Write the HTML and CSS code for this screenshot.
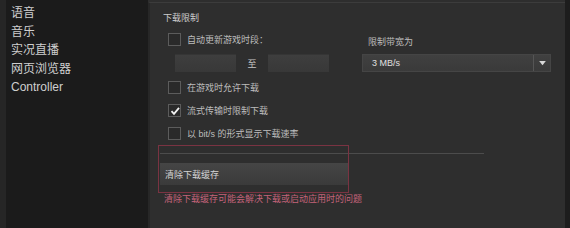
FILE: index.html
```html
<!DOCTYPE html>
<html lang="zh-CN">
<head>
  <meta charset="UTF-8"/>
  <title>下载设置</title>
  <link rel="stylesheet" href="styles.css">
</head>
<body>
<div class="edge"></div>
<nav class="sidebar">
  <div class="nav-item">语音</div>
  <div class="nav-item">音乐</div>
  <div class="nav-item">实况直播</div>
  <div class="nav-item">网页浏览器</div>
  <div class="nav-item">Controller</div>
</nav>
<main class="panel">
  <div class="section-title">下载限制</div>
  <div class="grid">
    <div class="left">
      <label class="check-row"><span class="box"></span>自动更新游戏时段：</label>
      <div class="time-row">
        <span class="input"></span>
        <span class="to">至</span>
        <span class="input"></span>
      </div>
      <label class="check-row"><span class="box"></span>在游戏时允许下载</label>
      <label class="check-row"><span class="box checked">
        <svg viewBox="0 0 12 12" width="12" height="12"><path d="M2.5 6.2 L5 8.8 L10 2.8" fill="none" stroke="#f2f2f2" stroke-width="1.8"/></svg>
      </span>流式传输时限制下载</label>
      <label class="check-row"><span class="box"></span>以 bit/s 的形式显示下载速率</label>
    </div>
    <div class="right">
      <div class="field-label">限制带宽为</div>
      <div class="select">
        <span class="select-value">3 MB/s</span>
        <span class="select-arrow"><svg viewBox="0 0 8 6" width="7" height="5"><path d="M0 0 H8 L4 5 Z" fill="#d8d8d8"/></svg></span>
      </div>
    </div>
  </div>
  <div class="rule"></div>
  <div class="cache">
    <button class="btn">清除下载缓存</button>
    <div class="hint">清除下载缓存可能会解决下载或启动应用时的问题</div>
    <div class="highlight"></div>
  </div>
</main>
<div class="edge-right"></div>
</body>
</html>
```

FILE: styles.css
```css
body {
  margin: 0;
  height: 228px;
  display: flex;
  background: #2e2e2e;
  font-family: 'Liberation Sans', 'Noto Sans CJK SC', sans-serif;
  overflow: hidden;
}
.edge {
  width: 6px;
  background: #262626;
}
.sidebar {
  width: 142px;
  background: #1b1b1b;
  padding: 4px 0 0 5px;
  box-sizing: border-box;
}
.nav-item {
  font-size: 12px;
  line-height: 18.5px;
  color: #cfcfcf;
}
.panel {
  flex: 1;
  position: relative;
  border-left: 2px solid #272727;
  border-top: 1px solid #3c3c3c;
  margin-top: 2px;
  padding: 10px 0 0 13px;
  color: #bdbdbd;
  font-size: 9px;
}
.edge-right {
  width: 5px;
  background: #1d1d1d;
}
.section-title {
  line-height: 11px;
  color: #cccccc;
}
.grid {
  display: flex;
  margin-top: 9px;
}
.left {
  width: 194px;
  padding-left: 5px;
}
.check-row {
  display: flex;
  align-items: center;
  height: 13px;
  gap: 6px;
}
.box {
  width: 11px;
  height: 11px;
  border: 1px solid #5c5c5c;
  background: #2a2a2a;
  display: flex;
  align-items: center;
  justify-content: center;
}
.box svg {
  flex: none;
}
.time-row {
  display: flex;
  align-items: center;
  margin: 8px 0 9px 7px;
}
.input {
  width: 61px;
  height: 18px;
  background: linear-gradient(#3e3e3e, #383838);
  border-top: 1px solid #353535;
  box-sizing: border-box;
}
.to {
  width: 32px;
  text-align: center;
  color: #c6c6c6;
}
.check-row + .check-row {
  margin-top: 10px;
}
.field-label {
  line-height: 11px;
  margin-top: 4px;
  padding-left: 6px;
  color: #bcbcbc;
}
.select {
  width: 189px;
  height: 18px;
  margin-top: 6px;
  display: flex;
  align-items: center;
  background: linear-gradient(#404040, #3a3a3a);
  border: 1px solid #454545;
  box-sizing: border-box;
}
.select-value {
  flex: 1;
  padding-left: 9px;
  color: #e0e0e0;
}
.select-arrow {
  width: 16px;
  height: 100%;
  border-left: 1px solid #555;
  display: flex;
  align-items: center;
  justify-content: center;
}
.rule {
  width: 324px;
  height: 1px;
  margin: 13px 0 0 -3px;
  background: #4c4c4c;
}
.cache {
  position: relative;
  margin-left: -3px;
  padding-top: 9px;
}
.btn {
  display: block;
  width: 188px;
  height: 22px;
  border: none;
  padding: 0 0 0 5px;
  text-align: left;
  font: inherit;
  color: #d4d4d4;
  background: linear-gradient(#454545, #3a3a3a);
}
.hint {
  margin-top: 9px;
  padding-left: 4px;
  line-height: 11px;
  color: #c4637a;
}
.highlight {
  position: absolute;
  left: -2px;
  top: -9px;
  width: 191px;
  height: 48px;
  border: 1px solid #7a3342;
  box-sizing: border-box;
}
```
